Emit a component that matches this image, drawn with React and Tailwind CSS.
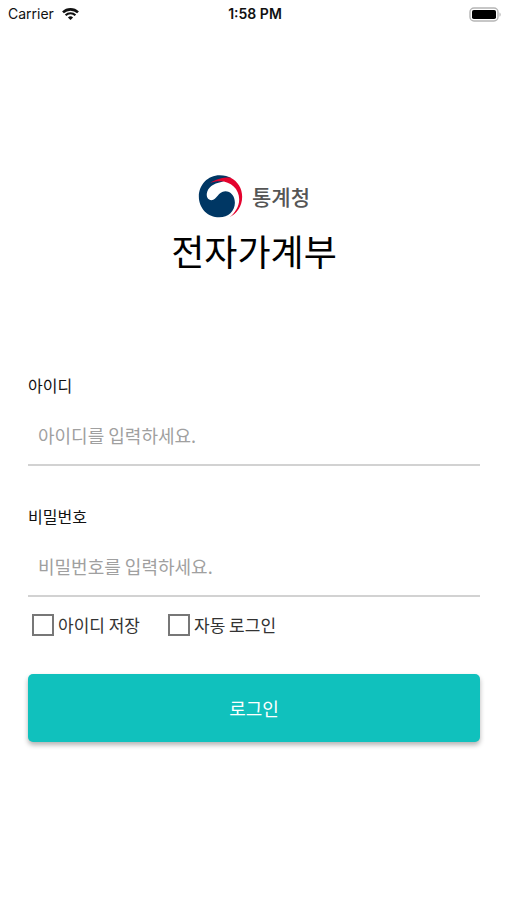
import { useState } from 'react';

function WifiIcon() {
  return (
    <svg viewBox="0 0 17 12" className="h-3 w-[17px]" aria-hidden="true">
      <path d="M1 4.4a10.8 10.8 0 0 1 15 0" fill="none" stroke="#111" strokeWidth="2.600" />
      <path d="M3.600 7.300a6.900 6.900 0 0 1 9.800 0" fill="none" stroke="#111" strokeWidth="2.200" />
      <path d="M5.900 9.500a3.700 3.700 0 0 1 5.200 0L8.500 12z" fill="#111" />
    </svg>
  );
}

function BatteryIcon() {
  return (
    <svg viewBox="0 0 33 15" className="h-[15px] w-[33px]" aria-hidden="true">
      <rect x="1" y="1" width="28" height="13" rx="4" fill="#fff" stroke="#b5b5b5" strokeWidth="1.400" />
      <rect x="3" y="3" width="24" height="9" rx="1.800" fill="#000" />
      <path d="M30.600 5.400c1.200.4 1.200 3.800 0 4.200z" fill="#999" />
    </svg>
  );
}

function TaegeukLogo() {
  return (
    <svg viewBox="0 0 135 130" className="h-[43px] w-[45px]" aria-hidden="true">
      {/* navy body */}
      <path
        d="M101 10C91 4 79 1 65 1C29 1 2 30 2 65C2 101 29 128 64 128C91 128 111 109 111 84C111 63 98 49 82 49C60 49 57 76 40 76C30 76 25 68 26 57C28 38 46 25 70 21Z"
        fill="#003764"
      />
      {/* red crescent */}
      <path
        d="M36 25C52 13 76 7 98 8C120 19 133 40 133 66C133 95 117 118 94 128C112 114 124 95 124 73C124 43 99 19 66 19C54 19 44 21 36 25Z"
        fill="#e4032e"
      />
    </svg>
  );
}

function StatusBar() {
  return (
    <header className="grid h-7 grid-cols-3 items-center px-2 pr-[5px] font-['Inter',sans-serif] text-sm text-[#111]">
      <div className="flex items-center gap-2">
        <span>Carrier</span>
        <WifiIcon />
      </div>
      <span className="text-center font-semibold">1:58 PM</span>
      <div className="flex justify-end">
        <BatteryIcon />
      </div>
    </header>
  );
}

function Field({ id, label, type, placeholder, value, onChange }) {
  return (
    <div>
      <label htmlFor={id} className="block text-base leading-6 text-[#111]">
        {label}
      </label>
      <input
        id={id}
        type={type}
        value={value}
        onChange={(e) => onChange(e.target.value)}
        placeholder={placeholder}
        className="mt-2 block h-[61px] w-full border-b-2 border-[#d2d2d2] px-[10px] text-lg text-[#333] outline-none placeholder:text-[#a0a0a0] focus:border-[#10c1bd]"
      />
    </div>
  );
}

function Check({ id, label, checked, onChange }) {
  return (
    <div className="flex items-center gap-1">
      <input
        id={id}
        type="checkbox"
        checked={checked}
        onChange={(e) => onChange(e.target.checked)}
        className="size-[22px] appearance-none border-2 border-[#777] checked:bg-[#10c1bd]"
      />
      <label htmlFor={id} className="text-[17px] leading-6 text-[#333]">
        {label}
      </label>
    </div>
  );
}

export default function App() {
  const [userId, setUserId] = useState('');
  const [password, setPassword] = useState('');
  const [saveId, setSaveId] = useState(false);
  const [autoLogin, setAutoLogin] = useState(false);

  return (
    <div className="min-h-screen bg-white font-['Noto_Sans_CJK_KR',sans-serif]">
      <StatusBar />

      <main className="pt-[147px] pr-[27px] pl-7">
        <div className="flex flex-col items-center">
          <div className="flex items-center gap-[9px]">
            <TaegeukLogo />
            <span className="text-[21px] leading-[43px] font-medium text-[#555]">통계청</span>
          </div>
          <h1 className="mt-2 text-4xl leading-[48px] text-black">전자가계부</h1>
        </div>

        <form className="mt-[99px]" onSubmit={(e) => e.preventDefault()}>
          <div className="flex flex-col gap-[38px]">
            <Field id="user-id" label="아이디" type="text" placeholder="아이디를 입력하세요." value={userId} onChange={setUserId} />
            <Field id="password" label="비밀번호" type="password" placeholder="비밀번호를 입력하세요." value={password} onChange={setPassword} />
          </div>

          <div className="mt-4 flex gap-7 pl-1">
            <Check id="save-id" label="아이디 저장" checked={saveId} onChange={setSaveId} />
            <Check id="auto-login" label="자동 로그인" checked={autoLogin} onChange={setAutoLogin} />
          </div>

          <button
            type="submit"
            className="mt-[37px] h-[68px] w-full rounded-[5px] bg-[#10c1bd] text-lg text-white shadow-[0_3px_5px_rgba(0,0,0,0.3)]"
          >
            로그인
          </button>
        </form>
      </main>
    </div>
  );
}
